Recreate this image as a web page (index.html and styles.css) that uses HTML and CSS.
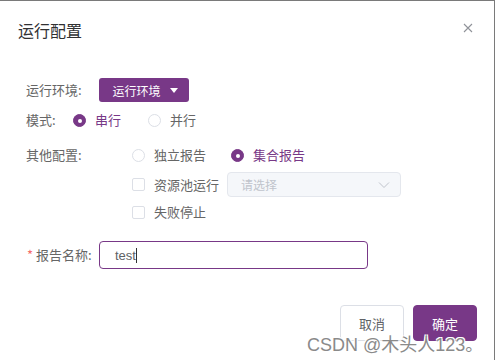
FILE: index.html
```html
<!DOCTYPE html>
<html lang="zh-CN">
<head>
    <meta charset="UTF-8">
    <title>运行配置</title>
    <link rel="stylesheet" href="styles.css">
</head>
<body>
<div class="dialog">
    <div class="dialog-header">
        <span class="dialog-title">运行配置</span>
        <svg class="close" width="10" height="10" viewBox="0 0 10 10">
            <path d="M1 1L9 9M9 1L1 9" stroke="#909399" stroke-width="1.1" fill="none"/>
        </svg>
    </div>
    <div class="dialog-body">
        <div class="row row-env">
            <span class="label">运行环境:</span>
            <button class="env-button">运行环境 <span class="caret-down"></span></button>
        </div>
        <div class="row row-mode">
            <span class="label">模式:</span>
            <span class="radio checked"></span><span class="opt active">串行</span>
            <span class="radio"></span><span class="opt">并行</span>
        </div>
        <div class="row row-other">
            <span class="label">其他配置:</span>
            <div class="options">
                <div class="opt-line">
                    <span class="radio"></span><span class="opt">独立报告</span>
                    <span class="radio checked"></span><span class="opt active">集合报告</span>
                </div>
                <div class="opt-line pool">
                    <span class="checkbox"></span><span class="opt">资源池运行</span>
                    <div class="select">
                        <span>请选择</span>
                        <svg width="12" height="8" viewBox="0 0 12 8">
                            <path d="M1 1.5L6 6.5L11 1.5" stroke="#c0c4cc" stroke-width="1" fill="none"/>
                        </svg>
                    </div>
                </div>
                <div class="opt-line stop">
                    <span class="checkbox"></span><span class="opt">失败停止</span>
                </div>
            </div>
        </div>
        <div class="row row-name">
            <span class="label"><span class="required">*</span> 报告名称:</span>
            <div class="input">test<span class="cursor"></span></div>
        </div>
    </div>
    <div class="dialog-footer">
        <button class="btn">取消</button>
        <button class="btn btn-primary">确定</button>
        <div class="watermark">CSDN @木头人123。</div>
    </div>
</div>
</body>
</html>
```

FILE: styles.css
```css
body {
    margin: 0;
    background: #fff;
    font-family: "Noto Sans CJK SC", "Liberation Sans", sans-serif;
}
.dialog {
    width: 494px;
    height: 359px;
    border-top: 1px solid #7a7a7a;
    border-right: 1px solid #7a7a7a;
    position: relative;
    background: #fff;
}
.dialog-header {
    display: flex;
    justify-content: space-between;
    align-items: center;
    height: 24px;
    padding: 17px 21px 0 18px;
}
.dialog-title {
    font-size: 16px;
    line-height: 24px;
    color: #303133;
}
.close {
    margin-top: -5px;
}
.dialog-body {
    padding: 36px 0 0 26px;
    font-size: 13px;
    color: #666;
}
.row {
    display: flex;
    align-items: center;
}
.label {
    line-height: 20px;
    white-space: nowrap;
}
.row-env {
    height: 24px;
}
.row-env .label {
    width: 73px;
}
.env-button {
    width: 90px;
    height: 24px;
    border: none;
    border-radius: 3px;
    background: #783887;
    color: #fff;
    font-family: inherit;
    font-size: 12px;
    padding: 0 0 0 2px;
    display: flex;
    align-items: center;
    justify-content: center;
}
.caret-down {
    display: inline-block;
    width: 0;
    height: 0;
    margin-left: 9px;
    border-left: 4px solid transparent;
    border-right: 4px solid transparent;
    border-top: 5px solid #fff;
}
.row-mode {
    height: 20px;
    margin-top: 8px;
}
.row-mode .label {
    width: 47px;
}
.row-mode .opt {
    margin-right: 27px;
}
.radio {
    width: 11px;
    height: 11px;
    border: 1px solid #dcdfe6;
    border-radius: 50%;
    box-sizing: content-box;
    position: relative;
    flex-shrink: 0;
}
.radio.checked {
    background: #783887;
    border-color: #783887;
}
.radio.checked::after {
    content: "";
    position: absolute;
    left: 4px;
    top: 4px;
    width: 4px;
    height: 4px;
    border-radius: 50%;
    background: #fff;
}
.opt {
    margin-left: 9px;
    margin-right: 25px;
    line-height: 20px;
    white-space: nowrap;
}
.opt.active {
    color: #783887;
}
.checkbox {
    width: 11px;
    height: 11px;
    border: 1px solid #dcdfe6;
    border-radius: 2px;
    flex-shrink: 0;
}
.row-other {
    align-items: flex-start;
    margin-top: 15px;
}
.row-other .label {
    width: 106px;
}
.options {
    display: flex;
    flex-direction: column;
}
.opt-line {
    display: flex;
    align-items: center;
    height: 20px;
}
.opt-line.pool {
    height: 25px;
    margin-top: 7px;
}
.opt-line.pool .opt {
    margin-right: 8px;
}
.opt-line.stop {
    margin-top: 5px;
}
.select {
    width: 149px;
    height: 23px;
    border: 1px solid #e4e7ed;
    border-radius: 4px;
    background: #f5f7fa;
    display: flex;
    align-items: center;
    justify-content: space-between;
    padding: 0 10px 0 13px;
    color: #c0c4cc;
    font-size: 12px;
    box-sizing: content-box;
}
.row-name {
    height: 28px;
    margin-top: 19px;
}
.row-name .label {
    width: 72px;
    margin-left: 1px;
}
.required {
    color: #f56c6c;
}
.input {
    width: 252px;
    height: 26px;
    border: 1px solid #783887;
    border-radius: 4px;
    padding-left: 15px;
    display: flex;
    align-items: center;
    color: #606266;
    font-size: 13px;
    font-family: "Liberation Sans", sans-serif;
}
.cursor {
    display: inline-block;
    width: 1px;
    height: 15px;
    background: #303133;
}
.dialog-footer {
    display: flex;
    justify-content: flex-end;
    gap: 9px;
    padding: 36px 17px 0 0;
}
.btn {
    width: 64px;
    height: 36px;
    border: 1px solid #dcdfe6;
    border-radius: 4px;
    background: #fff;
    color: #606266;
    font-family: inherit;
    font-size: 13px;
}
.btn-primary {
    background: #783887;
    border-color: #783887;
    color: #fff;
}
.watermark {
    position: absolute;
    left: 307px;
    top: 329px;
    font-family: "Liberation Sans", "Noto Sans CJK SC", sans-serif;
    font-size: 18px;
    color: #8a8a8a;
    white-space: nowrap;
    text-shadow: 1px 1px 0 #fff, -1px -1px 0 #fff, 1px -1px 0 #fff, -1px 1px 0 #fff;
}
```
